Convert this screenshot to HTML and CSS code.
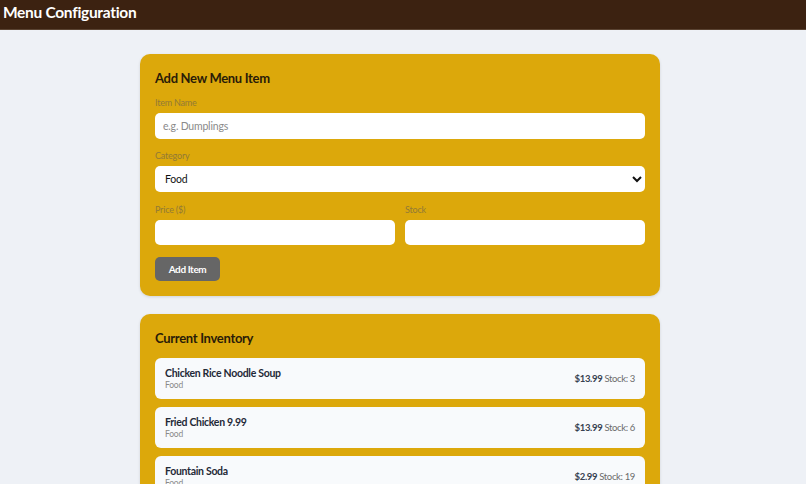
FILE: index.html
```html
<!DOCTYPE html>
<html>
<head>
<meta charset="utf-8">
<link rel="stylesheet" href="styles.css">
</head>
<body>
<header class="topbar"><h1 class="topbar-title">Menu Configuration</h1></header>
<div class="page">
<main class="main">
  <section class="card">
    <h2 class="card-title">Add New Menu Item</h2>
    <div class="field">
      <label class="label">Item Name</label>
      <input class="input" type="text" placeholder="e.g. Dumplings">
    </div>
    <div class="field">
      <label class="label">Category</label>
      <select class="input select"><option>Food</option></select>
    </div>
    <div class="row">
      <div class="field">
        <label class="label">Price ($)</label>
        <input class="input" type="text">
      </div>
      <div class="field">
        <label class="label">Stock</label>
        <input class="input" type="text">
      </div>
    </div>
    <button class="btn">Add Item</button>
  </section>
  <section class="card card-list">
    <h2 class="card-title">Current Inventory</h2>
    <div class="list">
      <div class="item">
        <div class="item-info"><div class="item-name">Chicken Rice Noodle Soup</div><div class="item-cat">Food</div></div>
        <div class="item-meta"><span class="price">$13.99</span> Stock: 3</div>
      </div>
      <div class="item">
        <div class="item-info"><div class="item-name">Fried Chicken 9.99</div><div class="item-cat">Food</div></div>
        <div class="item-meta"><span class="price">$13.99</span> Stock: 6</div>
      </div>
      <div class="item">
        <div class="item-info"><div class="item-name">Fountain Soda</div><div class="item-cat">Food</div></div>
        <div class="item-meta"><span class="price">$2.99</span> Stock: 19</div>
      </div>
    </div>
  </section>
</main>
</div>
</body>
</html>
```
FILE: styles.css
```css
* { box-sizing: border-box; }
html, body { margin: 0; padding: 0; }
body {
  background: #eef1f6;
  font-family: Lato, "Noto Sans", sans-serif;
  color: #1f2937;
  overflow: hidden;
  height: 484px;
}
.topbar {
  background: #3c2211;
  height: 30px;
  display: flex;
  align-items: center;
  padding: 0 3px;
  border-bottom: 1px solid #5a4332;
}
.topbar-title {
  margin: 0 0 5px;
  color: #fff;
  font-size: 15.5px;
  letter-spacing: -0.3px;
  font-weight: 700;
  line-height: 18px;
}
.page { padding-right: 6px; }
.main {
  width: 520px;
  margin: 24px auto 0;
  display: flex;
  flex-direction: column;
  gap: 18px;
}
.card {
  background: #dca80b;
  border-radius: 10px;
  padding: 16px 15px 15px;
  box-shadow: 0 1px 3px rgba(0,0,0,0.12);
}
.card-title {
  margin: 0 0 10px;
  font-size: 13px;
  letter-spacing: -0.3px;
  font-weight: 700;
  color: #2a1c08;
  line-height: 17px;
}
.field { display: flex; flex-direction: column; margin-bottom: 11px; }
.row .field { margin-bottom: 12px; }
.label {
  font-size: 9px;
  letter-spacing: -0.2px;
  color: #927a36;
  line-height: 12px;
  margin-bottom: 4px;
}
.input {
  height: 26px;
  border: none;
  border-radius: 5px;
  background: #fff;
  padding: 0 8px;
  font-family: inherit;
  font-size: 10.5px;
  letter-spacing: -0.2px;
  color: #111;
  width: 100%;
  outline: none;
}
.input::placeholder { color: #8a8a8a; }
.select { padding-left: 6px; padding-right: 2px; }
.row { display: grid; grid-template-columns: 1fr 1fr; gap: 10px; padding-top: 1px; }
.row .input { height: 25px; }
.btn {
  background: #666;
  color: #fff;
  border: none;
  border-radius: 5px;
  font-family: inherit;
  font-weight: 700;
  font-size: 10px;
  letter-spacing: -0.4px;
  height: 24px;
  width: 65px;
  padding: 0;
}
.list { display: flex; flex-direction: column; gap: 8px; margin-top: 11px; }
.item {
  background: #f8fafc;
  border-radius: 6px;
  height: 41px;
  flex: none;
  padding: 0 10px;
  display: flex;
  align-items: center;
  justify-content: space-between;
}
.item-name { font-size: 10.5px; letter-spacing: -0.3px; font-weight: 700; color: #1f2937; line-height: 13px; }
.item-cat { font-size: 8.5px; letter-spacing: -0.2px; color: #8a8a8a; line-height: 10px; }
.item-meta { font-size: 9.5px; letter-spacing: -0.35px; color: #6b6b6b; }
.price { font-weight: 700; color: #374151; }
```
